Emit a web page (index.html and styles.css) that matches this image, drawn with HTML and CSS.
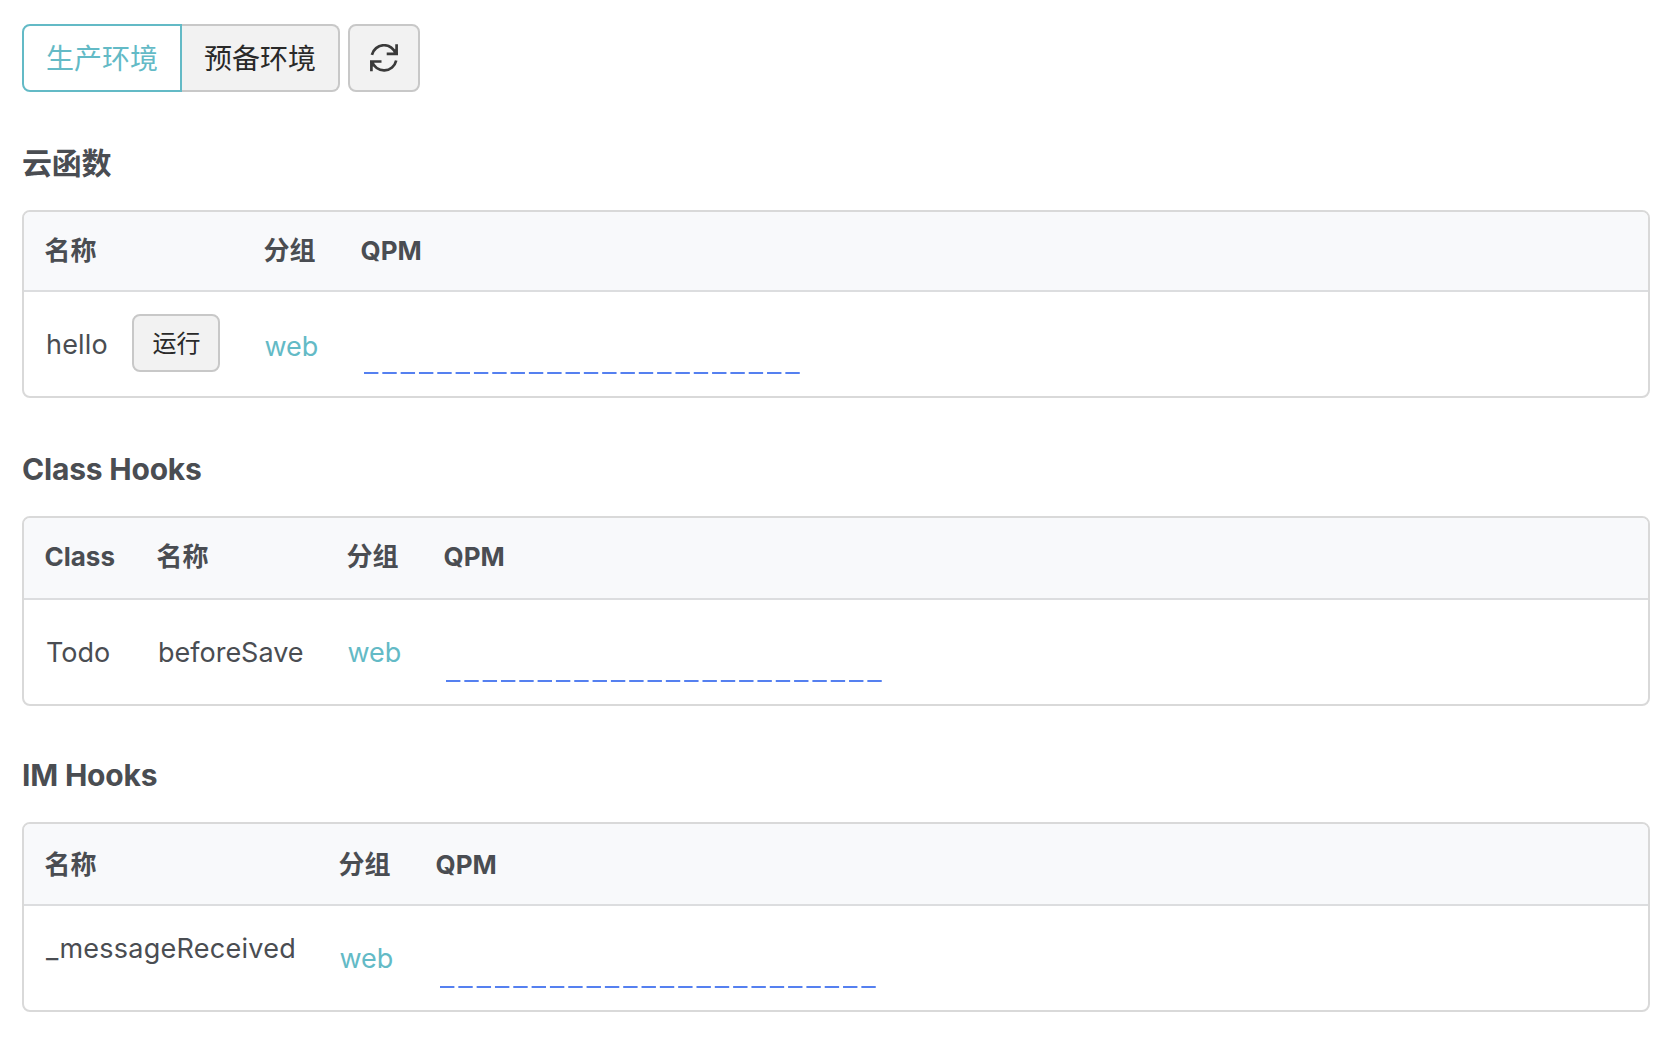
FILE: index.html
```
<!DOCTYPE html>
<html lang="zh-CN">
<head>
<meta charset="utf-8">
<title>云函数</title>
<link rel="stylesheet" href="styles.css">
</head>
<body>
<div class="toolbar">
  <div class="group">
    <button class="btn active">生产环境</button><button class="btn">预备环境</button>
  </div>
  <button class="btn refresh" aria-label="刷新">
    <svg width="28" height="28" viewBox="0 0 28 28" fill="none" stroke="#3a3a3a" stroke-width="2.700"><path d="M1.900 10.900A12.500 12.500 0 0 1 26 10M26.600 .2V11M28 9.900H16.700M26.200 16.500A12.500 12.500 0 0 1 2 17.400M1.400 27.200V16.400M0 17.500H11.500"/></svg>
  </button>
</div>

<section class="section functions">
  <h2 class="title">云函数</h2>
  <div class="card">
    <div class="row head"><span>名称</span><span>分组</span><span>QPM</span></div>
    <div class="row body">
      <span class="name"><span class="label">hello</span><button class="btn run">运行</button></span><a class="link">web</a>
      <svg class="chart" width="438" height="2"><line x1="0" y1="1" x2="436.300" y2="1"/></svg>
    </div>
  </div>
</section>

<section class="section class-hooks">
  <h2 class="title">Class Hooks</h2>
  <div class="card">
    <div class="row head"><span>Class</span><span>名称</span><span>分组</span><span>QPM</span></div>
    <div class="row body">
      <span class="name">Todo</span><span class="name">beforeSave</span><a class="link">web</a>
      <svg class="chart" width="438" height="2"><line x1="0" y1="1" x2="436.300" y2="1"/></svg>
    </div>
  </div>
</section>

<section class="section im-hooks">
  <h2 class="title">IM Hooks</h2>
  <div class="card">
    <div class="row head"><span>名称</span><span>分组</span><span>QPM</span></div>
    <div class="row body">
      <span class="name">_messageReceived</span><a class="link">web</a>
      <svg class="chart" width="438" height="2"><line x1="0" y1="1" x2="436.300" y2="1"/></svg>
    </div>
  </div>
</section>
</body>
</html>
```
FILE: styles.css
```
* { box-sizing: border-box; }
body {
  margin: 0;
  padding: 24px 24px 0 22px;
  background: #fff;
  color: #4a4d52;
  font: 27px/40px Inter, "Noto Sans CJK SC", sans-serif;
}
.toolbar { display: flex; gap: 8px; height: 68px; }
.group { display: flex; }
.btn {
  width: 160px;
  height: 68px;
  padding: 1px 0 0;
  border: 2px solid #c8c8c8;
  border-radius: 8px;
  background: #f2f2f2;
  color: #292929;
  font: 28px/40px Inter, "Noto Sans CJK SC", sans-serif;
}
.group .btn { border-radius: 0 8px 8px 0; border-left: 0; width: 158px; }
.group .active {
  width: 160px;
  border: 2px solid #63bac6;
  border-radius: 8px 0 0 8px;
  background: #fff;
  color: #63bac6;
}
.btn.refresh {
  display: flex;
  align-items: center;
  justify-content: center;
  width: 72px;
  padding: 0;
}
.title { margin: 0 0 27px; font-size: 30px; line-height: 40px; font-weight: 700; letter-spacing: -0.2px; }
.card { border: 2px solid #d9d9d9; border-radius: 8px; overflow: hidden; }
.row { display: grid; padding-left: 21px; }
.functions .row { grid-template-columns: 219px 97px 1fr; }
.class-hooks .row { grid-template-columns: 112px 190px 97px 1fr; }
.im-hooks .row { grid-template-columns: 294px 97px 1fr; }
.head {
  height: 82px;
  padding-left: 20.5px;
  align-items: center;
  border-bottom: 2px solid #dcdddf;
  background: #f8f9fb;
  font-size: 26px;
  font-weight: 700;
}
.functions .head { height: 80px; }
.class-hooks .head { padding-bottom: 2px; }
.im-hooks .head { padding-top: 2px; }
.body { height: 104px; align-items: center; }
.functions, .class-hooks { padding-top: 51px; }
.im-hooks { padding-top: 49px; }
.name { display: flex; align-items: center; padding: 2px 0 0 1px; }
.functions .name { padding-top: 0; letter-spacing: 0.2px; }
.functions .label { padding-top: 2px; }
.im-hooks .name { padding: 0 0 18px 1px; letter-spacing: 0.25px; }
.btn.run { width: 88px; height: 58px; margin: 0 0 2px 24.5px; padding: 2px 0 0; font-size: 24px; letter-spacing: 0; }
.link { padding: 2px 0 0 0.5px; color: #63bac6; }
.functions .link { padding-top: 5px; }
.chart { align-self: end; margin: 0 0 22px 2.7px; }
.class-hooks .chart { margin-left: 1.7px; }
.im-hooks .chart { margin-left: 3.7px; }
.chart line { stroke: #5580f0; stroke-width: 2; stroke-dasharray: 14.400 3.920; }
```
